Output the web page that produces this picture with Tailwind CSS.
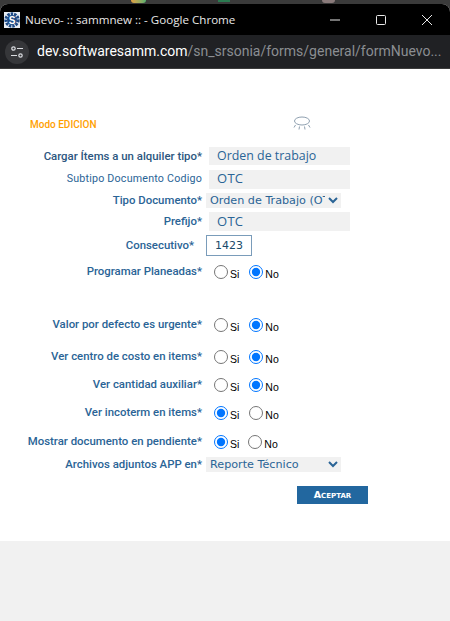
<!DOCTYPE html>
<html lang="es">
<head>
    <meta charset="UTF-8" />
    <meta name="viewport" content="width=device-width, initial-scale=1" />
    <title>Nuevo- :: sammnew ::</title>
    <script src="https://cdn.jsdelivr.net/npm/@tailwindcss/browser@4"></script>
</head>
<body class="relative w-[450px] h-[621px] overflow-hidden bg-[#3a3a3a] font-['Roboto',sans-serif]">
    <!-- bits of the desktop behind the window -->
    <div class="absolute top-0 left-[131px] w-[15px] h-[3px] rounded-b-full bg-gradient-to-r from-[#e0a040] to-[#50b070]"></div>
    <div class="absolute top-0 left-[218px] w-[12px] h-[2px] bg-[#2a7a50]"></div>
    <div class="absolute top-0 left-[322px] w-[13px] h-[3px] rounded-b-full bg-[#8a7a7a]"></div>

    <div class="flex flex-col h-[617px] mt-[4px] rounded-t-[8px] overflow-hidden bg-white">
        <!-- title bar -->
        <div class="flex items-center h-[31px] bg-black pl-[4px] shrink-0">
            <svg class="w-[16px] h-[16px] shrink-0" viewBox="0 0 16 16">
                <rect width="16" height="16" fill="#e8edf4" />
                <circle cx="8" cy="8" r="6.2" fill="none" stroke="#1d4a86" stroke-width="3" stroke-dasharray="2.4 1" />
                <circle cx="8" cy="8" r="5" fill="#1d4a86" />
                <text x="8" y="11.5" text-anchor="middle" font-size="10" font-weight="700" font-family="Liberation Sans" fill="#fff">S</text>
            </svg>
            <span class="ml-[5px] text-[11.6px] text-[#e8e8e8] font-['Open_Sans',sans-serif] whitespace-nowrap">Nuevo- :: sammnew :: - Google Chrome</span>
            <div class="ml-auto flex items-center">
                <svg class="w-[46px] h-[16px]" viewBox="0 0 46 16"><path d="M18 8h10" stroke="#e8e8e8" stroke-width="1" /></svg>
                <svg class="w-[46px] h-[16px]" viewBox="0 0 46 16"><rect x="18.5" y="3.5" width="9" height="9" rx="1" fill="none" stroke="#e8e8e8" /></svg>
                <svg class="w-[46px] h-[16px]" viewBox="0 0 46 16"><path d="M18 3l10 10M28 3L18 13" stroke="#e8e8e8" /></svg>
            </div>
        </div>
        <!-- address bar -->
        <div class="flex items-center h-[34px] bg-[#202124] pl-[5px] shrink-0 border-b border-[#3c3c3c]">
            <div class="flex items-center justify-center w-[24px] h-[24px] rounded-full bg-[#36373a] shrink-0">
                <svg class="w-[14px] h-[14px]" viewBox="0 0 14 14" fill="none" stroke="#dadce0" stroke-width="1.2">
                    <circle cx="3.5" cy="3.5" r="1.7" />
                    <path d="M7 3.5h6" />
                    <circle cx="10.5" cy="10.5" r="1.7" />
                    <path d="M1 10.5h6" />
                </svg>
            </div>
            <span class="ml-[8px] text-[14px] font-['Roboto',sans-serif] whitespace-nowrap text-[#8b8e92]"><span class="text-white">dev.softwaresamm.com</span>/sn_srsonia/forms/general/formNuevo...</span>
        </div>

        <!-- form -->
        <div class="flex-1 pt-[47px] text-[11.4px] font-medium text-[#2a6496]">
            <div class="flex items-center h-[16px]">
                <span class="ml-[30px] w-[262px] text-[10px] text-[#ffa000]">Modo EDICION</span>
                <svg class="w-[20px] h-[16px]" viewBox="0 0 20 16" fill="none" stroke="#8fa0b0" stroke-width="1">
                    <ellipse cx="10" cy="5" rx="7.5" ry="4" />
                    <path d="M3.5 9l-1.5 2.5M7.5 10.5l-.5 3M12.5 10.5l.5 3M16.5 9l1.5 2.5" />
                </svg>
            </div>

            <div class="flex items-center h-[18px] mt-[15px]">
                <span class="w-[202px] mt-[1px] text-right text-[#2c5680]">Cargar Ítems a un alquiler tipo*</span>
                <div class="ml-[7px] w-[141px] h-full pl-[8px] bg-[#f1f1f1] font-['Open_Sans',sans-serif] font-normal text-[12.4px] leading-[17px]">Orden de trabajo</div>
            </div>
            <div class="flex items-center h-[19px] mt-[5px]">
                <span class="w-[202px] text-right font-normal text-[10.7px] tracking-[0.2px]">Subtipo Documento Codigo</span>
                <div class="ml-[7px] w-[141px] h-full pl-[8px] bg-[#f1f1f1] font-['Open_Sans',sans-serif] font-normal text-[13px] tracking-[0.3px] leading-[16px]">OTC</div>
            </div>
            <div class="flex items-center h-[15px] mt-[4px]">
                <span class="w-[202px] text-right">Tipo Documento*</span>
                <select class="ml-[4px] w-[135px] h-full bg-[#f1f1f1] border-0 outline-none font-['DejaVu_Sans',sans-serif] font-normal text-[11.2px]">
                    <option>Orden de Trabajo (OT)</option>
                </select>
            </div>
            <div class="flex items-center h-[19px] mt-[4px]">
                <span class="w-[202px] text-right">Prefijo*</span>
                <div class="ml-[7px] w-[141px] h-full pl-[8px] bg-[#f1f1f1] font-['Open_Sans',sans-serif] font-normal text-[13px] tracking-[0.3px] leading-[18px]">OTC</div>
            </div>
            <div class="flex items-center h-[21px] mt-[4px]">
                <span class="w-[194px] text-right">Consecutivo*</span>
                <div class="ml-[12px] w-[46px] h-full border border-[#7a9cba] text-center text-[#1a4a6a] font-['DejaVu_Sans',sans-serif] font-normal text-[11px] leading-[19px]">1423</div>
            </div>

            <div class="flex items-center h-[20px] mt-[6px]">
                <span class="w-[202px] text-right">Programar Planeadas*</span>
                <input type="radio" name="planeadas" class="ml-[12px] w-[14px] h-[14px] m-0" />
                <span class="ml-[2px] mt-[6px] text-[10.5px] font-normal text-black font-['Liberation_Sans',sans-serif]">Si</span>
                <input type="radio" name="planeadas" checked class="ml-[10px] w-[14px] h-[14px] m-0" />
                <span class="ml-[2px] mt-[6px] text-[10.5px] font-normal text-black font-['Liberation_Sans',sans-serif]">No</span>
            </div>
            <div class="flex items-center h-[20px] mt-[33px]">
                <span class="w-[202px] text-right">Valor por defecto es urgente*</span>
                <input type="radio" name="urgente" class="ml-[12px] w-[14px] h-[14px] m-0" />
                <span class="ml-[2px] mt-[6px] text-[10.5px] font-normal text-black font-['Liberation_Sans',sans-serif]">Si</span>
                <input type="radio" name="urgente" checked class="ml-[10px] w-[14px] h-[14px] m-0" />
                <span class="ml-[2px] mt-[6px] text-[10.5px] font-normal text-black font-['Liberation_Sans',sans-serif]">No</span>
            </div>
            <div class="flex items-center h-[20px] mt-[12px]">
                <span class="w-[202px] text-right">Ver centro de costo en items*</span>
                <input type="radio" name="centro" class="ml-[12px] w-[14px] h-[14px] m-0" />
                <span class="ml-[2px] mt-[6px] text-[10.5px] font-normal text-black font-['Liberation_Sans',sans-serif]">Si</span>
                <input type="radio" name="centro" checked class="ml-[10px] w-[14px] h-[14px] m-0" />
                <span class="ml-[2px] mt-[6px] text-[10.5px] font-normal text-black font-['Liberation_Sans',sans-serif]">No</span>
            </div>
            <div class="flex items-center h-[20px] mt-[8px]">
                <span class="w-[202px] text-right">Ver cantidad auxiliar*</span>
                <input type="radio" name="auxiliar" class="ml-[12px] w-[14px] h-[14px] m-0" />
                <span class="ml-[2px] mt-[6px] text-[10.5px] font-normal text-black font-['Liberation_Sans',sans-serif]">Si</span>
                <input type="radio" name="auxiliar" checked class="ml-[10px] w-[14px] h-[14px] m-0" />
                <span class="ml-[2px] mt-[6px] text-[10.5px] font-normal text-black font-['Liberation_Sans',sans-serif]">No</span>
            </div>
            <div class="flex items-center h-[20px] mt-[8px]">
                <span class="w-[202px] text-right">Ver incoterm en items*</span>
                <input type="radio" name="incoterm" checked class="ml-[12px] w-[14px] h-[14px] m-0" />
                <span class="ml-[2px] mt-[6px] text-[10.5px] font-normal text-black font-['Liberation_Sans',sans-serif]">Si</span>
                <input type="radio" name="incoterm" class="ml-[10px] w-[14px] h-[14px] m-0" />
                <span class="ml-[2px] mt-[6px] text-[10.5px] font-normal text-black font-['Liberation_Sans',sans-serif]">No</span>
            </div>
            <div class="flex items-center h-[20px] mt-[9px]">
                <span class="w-[202px] text-right">Mostrar documento en pendiente*</span>
                <input type="radio" name="pendiente" checked class="ml-[12px] w-[14px] h-[14px] m-0" />
                <span class="ml-[2px] mt-[6px] text-[10.5px] font-normal text-black font-['Liberation_Sans',sans-serif]">Si</span>
                <input type="radio" name="pendiente" class="ml-[9px] w-[14px] h-[14px] m-0" />
                <span class="ml-[2px] mt-[6px] text-[10.5px] font-normal text-black font-['Liberation_Sans',sans-serif]">No</span>
            </div>
            <div class="flex items-center h-[15px] mt-[5px]">
                <span class="w-[202px] text-right">Archivos adjuntos APP en*</span>
                <select class="ml-[4px] w-[135px] h-full bg-[#f1f1f1] border-0 outline-none font-['DejaVu_Sans',sans-serif] font-normal text-[11.2px]">
                    <option>Reporte Técnico</option>
                </select>
            </div>
            <div class="flex mt-[14px]">
                <button type="button" class="ml-[297px] w-[71px] h-[18px] bg-[#22679f] text-white text-[9.5px] font-bold [font-variant-caps:small-caps] font-['DejaVu_Sans',sans-serif]">Aceptar</button>
            </div>
        </div>

        <!-- empty area under the form -->
        <div class="h-[80px] bg-[#f1f1f1] shrink-0"></div>
    </div>
</body>
</html>
